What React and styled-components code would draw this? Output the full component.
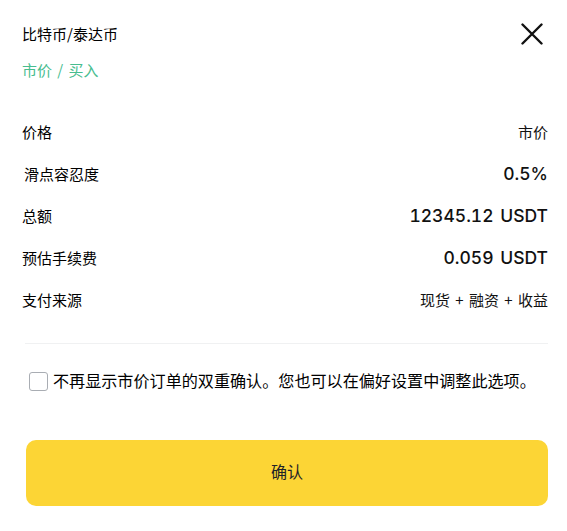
import React from 'react';
import styled, { createGlobalStyle } from 'styled-components';

const Global = createGlobalStyle`
  body {
    margin: 0;
    background: #fff;
    font-family: "Noto Sans CJK SC", "Noto Sans", sans-serif;
    color: #1e2329;
  }
`;

const Sheet = styled.div`
  padding: 23px 19px 0 22px;
`;

const Header = styled.div`
  display: flex;
  justify-content: space-between;
  align-items: center;
  height: 22px;
`;

const Title = styled.div`
  font-size: 15px;
  line-height: 20px;
  font-weight: 400;
  color: #000;
`;

const Close = styled.button`
  border: 0;
  background: none;
  padding: 0;
  margin-right: 5px;
  width: 22px;
  height: 22px;
  display: flex;
  cursor: pointer;
`;

const Sub = styled.div`
  margin-top: 15px;
  font-size: 15px;
  line-height: 20px;
  word-spacing: 2px;
  color: #48bd8f;
`;

const Rows = styled.div`
  margin-top: 41px;
  display: flex;
  flex-direction: column;
  gap: 22px;
`;

const Row = styled.div`
  display: flex;
  justify-content: space-between;
  align-items: center;
  height: 20px;
`;

const Label = styled.span`
  font-size: 15px;
  font-weight: 400;
  color: #000;
  padding-left: ${p => p.$indent || 0}px;
`;

const Value = styled.span`
  font-size: ${p => (p.$num ? 17.5 : 15)}px;
  font-family: ${p => (p.$num ? 'Inter, "Noto Sans CJK SC", sans-serif' : '"Noto Sans CJK SC", sans-serif')};
  font-weight: ${p => (p.$num ? 500 : 400)};
  color: #111;
  font-variant-numeric: tabular-nums;
  word-spacing: 2px;
`;

const Divider = styled.hr`
  margin: 34px 0 0 3px;
  border: 0;
  border-top: 1px solid #f0f1f2;
`;

const Check = styled.label`
  margin-top: 25px;
  padding-left: 7px;
  display: flex;
  align-items: center;
  gap: 5px;
  font-size: 16.1px;
  line-height: 22px;
  color: #000;
`;

const Box = styled.span`
  width: 17px;
  height: 17px;
  border: 1px solid #a9adb3;
  border-radius: 3px;
  flex-shrink: 0;
  margin-top: 2px;
`;

const Confirm = styled.button`
  margin: 49px 0 0 4px;
  width: calc(100% - 4px);
  height: 66px;
  border: 0;
  border-radius: 10px;
  background: #fcd535;
  font-family: "Noto Sans CJK SC", sans-serif;
  font-size: 16px;
  font-weight: 400;
  color: #1e2329;
  padding: 0 0 4px;
  cursor: pointer;
`;

const rows = [
  { label: '价格', value: '市价', indent: 0 },
  { label: '滑点容忍度', value: '0.5%', num: true, indent: 2 },
  { label: '总额', value: '12345.12 USDT', num: true },
  { label: '预估手续费', value: '0.059 USDT', num: true },
  { label: '支付来源', value: '现货 + 融资 + 收益' },
];

export default function App() {
  return (
    <Sheet>
      <Global />
      <Header>
        <Title>比特币/泰达币</Title>
        <Close aria-label="close">
          <svg width="22" height="22" viewBox="0 0 22 22">
            <path d="M1.5 1.5L20.5 20.5M20.5 1.5L1.5 20.5" stroke="#111" strokeWidth="2.4" strokeLinecap="round" />
          </svg>
        </Close>
      </Header>
      <Sub>市价 / 买入</Sub>
      <Rows>
        {rows.map(r => (
          <Row key={r.label}>
            <Label $indent={r.indent}>{r.label}</Label>
            <Value $num={r.num}>{r.value}</Value>
          </Row>
        ))}
      </Rows>
      <Divider />
      <Check>
        <Box />
        不再显示市价订单的双重确认。您也可以在偏好设置中调整此选项。
      </Check>
      <Confirm>确认</Confirm>
    </Sheet>
  );
}
